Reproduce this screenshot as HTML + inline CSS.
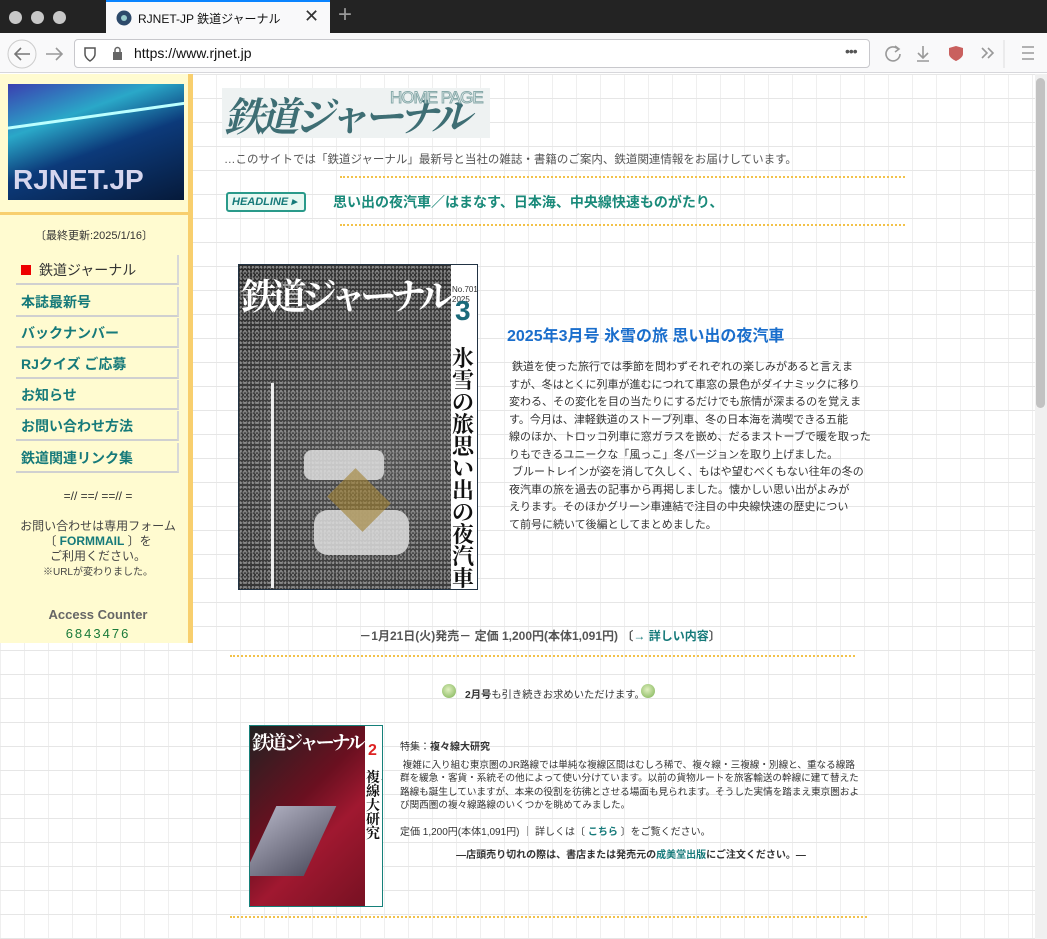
<!DOCTYPE html>
<html><head><meta charset="utf-8"><style>
*{margin:0;padding:0;box-sizing:border-box}
body{width:1047px;height:939px;overflow:hidden;font-family:"Liberation Sans","Noto Sans CJK JP",sans-serif;position:relative;background:#fff}
.abs{position:absolute}
.tabbar{left:0;top:0;width:1047px;height:33px;background:#232323}
.dot{width:13px;height:13px;border-radius:50%;background:#c8c8c8;top:11px}
.tab{left:106px;top:0;width:224px;height:33px;background:#f9f9fa;border-top:2px solid #0a84ff}
.toolbar{left:0;top:33px;width:1047px;height:40px;background:#f9f9fa;border-bottom:1px solid #d7d7db}
.url{left:74px;top:39px;width:796px;height:29px;background:#fff;border:1px solid #c8c8cc;border-radius:4px}
.page{left:0;top:74px;width:1035px;height:865px;background-color:#fff;background-image:linear-gradient(#e6e6e6 1px,transparent 1px),linear-gradient(90deg,#efefef 1px,transparent 1px);background-size:24px 24px,24px 24px}
.scroll{left:1035px;top:74px;width:12px;height:865px;background:#f0f0f0}
.side{left:0;top:74px;width:188px;height:569px;background:#fffbd0}
.sideb{left:188px;top:74px;width:5px;height:569px;background:#f8cf6e}
.nav{left:16px;width:163px;height:30px;border-bottom:2px solid #d0d0d0;border-right:2px solid #d8d8d8;font-size:14px;font-weight:bold;color:#167a7a;padding:5px 0 0 5px}
.dash{height:0;border-top:2px dotted #f2c24a}
.body{font-size:11px;color:#333;line-height:17.5px;white-space:nowrap}
.small{font-size:9.6px;line-height:13.3px;color:#333;white-space:nowrap}
</style></head><body>
<div class="abs tabbar"></div>
<div class="abs dot" style="left:9px"></div><div class="abs dot" style="left:31px"></div><div class="abs dot" style="left:53px"></div>
<div class="abs tab"><svg class="abs" style="left:10px;top:8px" width="16" height="16"><circle cx="8" cy="8" r="7.5" fill="#2d4a6a"/><circle cx="8" cy="8" r="3" fill="#9cc"/></svg><span class="abs" style="left:32px;top:8px;font-size:12px;color:#111">RJNET-JP 鉄道ジャーナル</span><span class="abs" style="left:198px;top:4px;font-size:18px;color:#333">✕</span></div>
<span class="abs" style="left:338px;top:1px;font-size:24px;color:#999">+</span>
<div class="abs toolbar"></div>
<svg class="abs" style="left:6px;top:38px" width="70" height="32"><circle cx="16" cy="16" r="14" fill="none" stroke="#ccc"/><path d="M24 16H9M15 10l-6 6 6 6" stroke="#777" stroke-width="1.6" fill="none"/><path d="M40 16h15M50 10l6 6-6 6" stroke="#999" stroke-width="1.6" fill="none"/></svg>
<div class="abs url"></div>
<svg class="abs" style="left:82px;top:45px" width="40" height="18"><path d="M3 3h10v6c0 4-5 7-5 7s-5-3-5-7z" fill="none" stroke="#555" stroke-width="1.5"/><rect x="31" y="7" width="9" height="8" fill="#666"/><path d="M33 7V5a2.5 2.5 0 0 1 5 0v2" stroke="#666" fill="none" stroke-width="1.5"/></svg>
<span class="abs" style="left:134px;top:45px;font-size:14px;color:#111">https://www.rjnet.jp</span>
<span class="abs" style="left:845px;top:43px;font-size:14px;color:#555;letter-spacing:-1px">•••</span>
<svg class="abs" style="left:880px;top:40px" width="160" height="28"><path d="M18 9a7 7 0 1 0 2 5" fill="none" stroke="#999" stroke-width="1.6"/><path d="M15 6l4 3-4 3" fill="none" stroke="#999" stroke-width="1.6"/><path d="M43 6v12M38 13l5 5 5-5M37 21h12" stroke="#999" stroke-width="1.6" fill="none"/><path d="M69 8l7-2 7 2v6c0 4-7 7-7 7s-7-3-7-7z" fill="#c9605e"/><path d="M102 8l5 5-5 5M108 8l5 5-5 5" stroke="#999" stroke-width="1.6" fill="none"/><line x1="124" y1="0" x2="124" y2="28" stroke="#ddd"/><path d="M142 7h12M142 13h12M142 19h12" stroke="#999" stroke-width="1.6"/></svg>
<div class="abs page"></div>
<div class="abs scroll"><div style="margin:4px 1px;width:9px;height:330px;background:#c2c2c2;border-radius:5px"></div></div>
<div class="abs side"></div><div class="abs sideb"></div>
<div class="abs" style="left:0;top:212px;width:188px;height:3px;background:#f8cf6e"></div>
<div class="abs" style="left:8px;top:84px;width:176px;height:116px;background:linear-gradient(160deg,#3b3fb0 0%,#2aa8c8 30%,#0c3a7a 55%,#061a3a 100%);overflow:hidden">
<div class="abs" style="left:-5px;top:30px;width:190px;height:3px;background:#bff;transform:rotate(-8deg)"></div>
<span class="abs" style="left:5px;top:80px;font-size:28px;font-weight:bold;color:#d6d6ee">RJNET.JP</span></div>
<div class="abs" style="left:0;top:227px;width:188px;text-align:center;font-size:11px;color:#333">〔最終更新:2025/1/16〕</div>
<div class="abs nav" style="top:255px;color:#333;font-weight:normal"><span style="display:inline-block;width:10px;height:10px;background:#e00;margin-right:8px"></span>鉄道ジャーナル</div>
<div class="abs nav" style="top:287px">本誌最新号</div>
<div class="abs nav" style="top:318px">バックナンバー</div>
<div class="abs nav" style="top:349px">RJクイズ ご応募</div>
<div class="abs nav" style="top:380px">お知らせ</div>
<div class="abs nav" style="top:411px">お問い合わせ方法</div>
<div class="abs nav" style="top:443px">鉄道関連リンク集</div>
<div class="abs" style="left:0;top:489px;width:196px;text-align:center;font-size:12px;color:#333">=// ==/ ==// =</div>
<div class="abs" style="left:0;top:519px;width:196px;text-align:center;font-size:12px;color:#444;line-height:15px">お問い合わせは専用フォーム<br>〔 <b style="color:#167a7a">FORMMAIL</b> 〕を<br>ご利用ください。<br><span style="font-size:10px">※URLが変わりました。</span></div>
<div class="abs" style="left:0;top:607px;width:196px;text-align:center;font-size:13px;font-weight:bold;color:#666">Access Counter</div>
<div class="abs" style="left:0;top:626px;width:196px;text-align:center;font-size:13px;color:#1a7a3a;letter-spacing:2px">6843476</div>

<div class="abs" style="left:222px;top:88px;width:268px;height:50px;background:#eef2f2"></div>
<span class="abs" style="left:224px;top:86px;font-size:40px;font-style:italic;font-weight:bold;color:#3e6e74;font-family:'Noto Serif CJK SC',serif;letter-spacing:-5px">鉄道ジャーナル</span>
<span class="abs" style="left:390px;top:88px;font-size:17px;color:#fff;-webkit-text-stroke:1px #8aa;letter-spacing:-1px">HOME PAGE</span>
<div class="abs" style="left:224px;top:151px;font-size:11.5px;color:#555">…このサイトでは「鉄道ジャーナル」最新号と当社の雑誌・書籍のご案内、鉄道関連情報をお届けしています。</div>
<div class="abs dash" style="left:340px;top:176px;width:565px"></div>
<div class="abs" style="left:226px;top:192px;width:80px;height:20px;border:2px solid #2a9a8a;border-radius:3px;background:#e8f8f2;font-size:11px;font-weight:bold;font-style:italic;color:#167a7a;padding:1px 0 0 4px">HEADLINE ▸</div>
<div class="abs" style="left:333px;top:192px;font-size:14px;font-weight:bold;color:#1a8a7a">思い出の夜汽車／はまなす、日本海、中央線快速ものがたり、</div>
<div class="abs dash" style="left:340px;top:224px;width:565px"></div>

<div class="abs" style="left:238px;top:264px;width:240px;height:326px;border:1px solid #234;background:radial-gradient(circle at 60% 60%,#555,#2a2a2a);overflow:hidden">
<div class="abs" style="left:0;top:0;width:240px;height:326px;background-image:radial-gradient(#bbb 0.8px,transparent 1px),radial-gradient(#999 0.7px,transparent 1px);background-size:4px 4px,3px 5px;opacity:.7"></div>
<span class="abs" style="left:2px;top:4px;font-size:36px;color:#fff;font-family:'Noto Serif CJK SC',serif;font-weight:bold;letter-spacing:-6px">鉄道ジャーナル</span>
<div class="abs" style="left:212px;top:0;width:28px;height:326px;background:#fff"></div>
<span class="abs" style="left:213px;top:20px;font-size:8px;line-height:10px;color:#333">No.701<br>2025</span>
<span class="abs" style="left:216px;top:30px;font-size:28px;font-weight:bold;color:#1a6a7a">3</span>
<div class="abs" style="left:213px;top:82px;font-size:22px;line-height:22px;width:26px;font-family:'Noto Serif CJK SC',serif;font-weight:bold;color:#111">氷雪の旅思い出の夜汽車</div>
<div class="abs" style="left:32px;top:118px;width:3px;height:205px;background:#eee"></div>
<div class="abs" style="left:65px;top:185px;width:80px;height:30px;background:#ddd;border-radius:8px;opacity:.85"></div>
<div class="abs" style="left:75px;top:245px;width:95px;height:45px;background:#ddd;border-radius:14px;opacity:.85"></div>
<div class="abs" style="left:95px;top:215px;width:50px;height:40px;background:#a08030;transform:rotate(45deg);opacity:.6"></div>
</div>

<div class="abs" style="left:507px;top:322px;font-size:16px;font-weight:bold;color:#1a6ecc">2025年3月号 氷雪の旅 思い出の夜汽車</div>
<div class="abs body" style="left:509px;top:359px">&nbsp;鉄道を使った旅行では季節を問わずそれぞれの楽しみがあると言えま<br>すが、冬はとくに列車が進むにつれて車窓の景色がダイナミックに移り<br>変わる、その変化を目の当たりにするだけでも旅情が深まるのを覚えま<br>す。今月は、津軽鉄道のストーブ列車、冬の日本海を満喫できる五能<br>線のほか、トロッコ列車に窓ガラスを嵌め、だるまストーブで暖を取った<br>りもできるユニークな「風っこ」冬バージョンを取り上げました。<br>&nbsp;ブルートレインが姿を消して久しく、もはや望むべくもない往年の冬の<br>夜汽車の旅を過去の記事から再掲しました。懐かしい思い出がよみが<br>えります。そのほかグリーン車連結で注目の中央線快速の歴史につい<br>て前号に続いて後編としてまとめました。</div>

<div class="abs" style="left:230px;top:627px;width:620px;text-align:center;font-size:12px;font-weight:bold;color:#555">－1月21日(火)発売－ 定価 1,200円(本体1,091円) 〔<span style="color:#167a7a">→ 詳しい内容</span>〕</div>
<div class="abs dash" style="left:230px;top:655px;width:625px"></div>
<div class="abs" style="left:442px;top:684px;width:14px;height:14px;border-radius:50%;background:radial-gradient(circle at 45% 40%,#e0f0c0,#7ab050)"></div>
<div class="abs" style="left:641px;top:684px;width:14px;height:14px;border-radius:50%;background:radial-gradient(circle at 45% 40%,#e0f0c0,#7ab050)"></div>
<div class="abs" style="left:465px;top:686px;font-size:10.3px;color:#333;white-space:nowrap"><b>2月号</b>も引き続きお求めいただけます。</div>
<div class="abs" style="left:249px;top:725px;width:134px;height:182px;border:1px solid #16807a;background:linear-gradient(135deg,#222 0%,#6a1020 40%,#a01830 60%,#701020 100%);overflow:hidden">
<span class="abs" style="left:2px;top:2px;font-size:19px;color:#fff;font-family:'Noto Serif CJK SC',serif;font-weight:bold;letter-spacing:-3px">鉄道ジャーナル</span>
<div class="abs" style="left:115px;top:0;width:19px;height:182px;background:#fff"></div>
<span class="abs" style="left:118px;top:16px;font-size:16px;font-weight:bold;color:#d22">2</span>
<div class="abs" style="left:116px;top:44px;width:16px;font-size:14px;line-height:14px;font-family:'Noto Serif CJK SC',serif;font-weight:bold;color:#111">複々線大研究</div>
<div class="abs" style="left:10px;top:80px;width:60px;height:70px;background:linear-gradient(135deg,#aab,#556);transform:skew(-25deg)"></div>
</div>
<div class="abs" style="left:400px;top:738px;font-size:10px;color:#333">特集：<b>複々線大研究</b></div>
<div class="abs small" style="left:400px;top:759px">&nbsp;複雑に入り組む東京圏のJR路線では単純な複線区間はむしろ稀で、複々線・三複線・別線と、重なる線路<br>群を緩急・客貨・系統その他によって使い分けています。以前の貨物ルートを旅客輸送の幹線に建て替えた<br>路線も誕生していますが、本来の役割を彷彿とさせる場面も見られます。そうした実情を踏まえ東京圏およ<br>び関西圏の複々線路線のいくつかを眺めてみました。</div>
<div class="abs" style="left:400px;top:823px;font-size:10px;color:#333;white-space:nowrap">定価 1,200円(本体1,091円) ｜ 詳しくは〔 <b style="color:#167a7a">こちら</b> 〕をご覧ください。</div>
<div class="abs" style="left:400px;top:846px;width:462px;text-align:center;font-size:10px;font-weight:bold;color:#333;white-space:nowrap">―店頭売り切れの際は、書店または発売元の<span style="color:#167a7a">成美堂出版</span>にご注文ください。―</div>
<div class="abs dash" style="left:230px;top:916px;width:637px"></div>
</body></html>
